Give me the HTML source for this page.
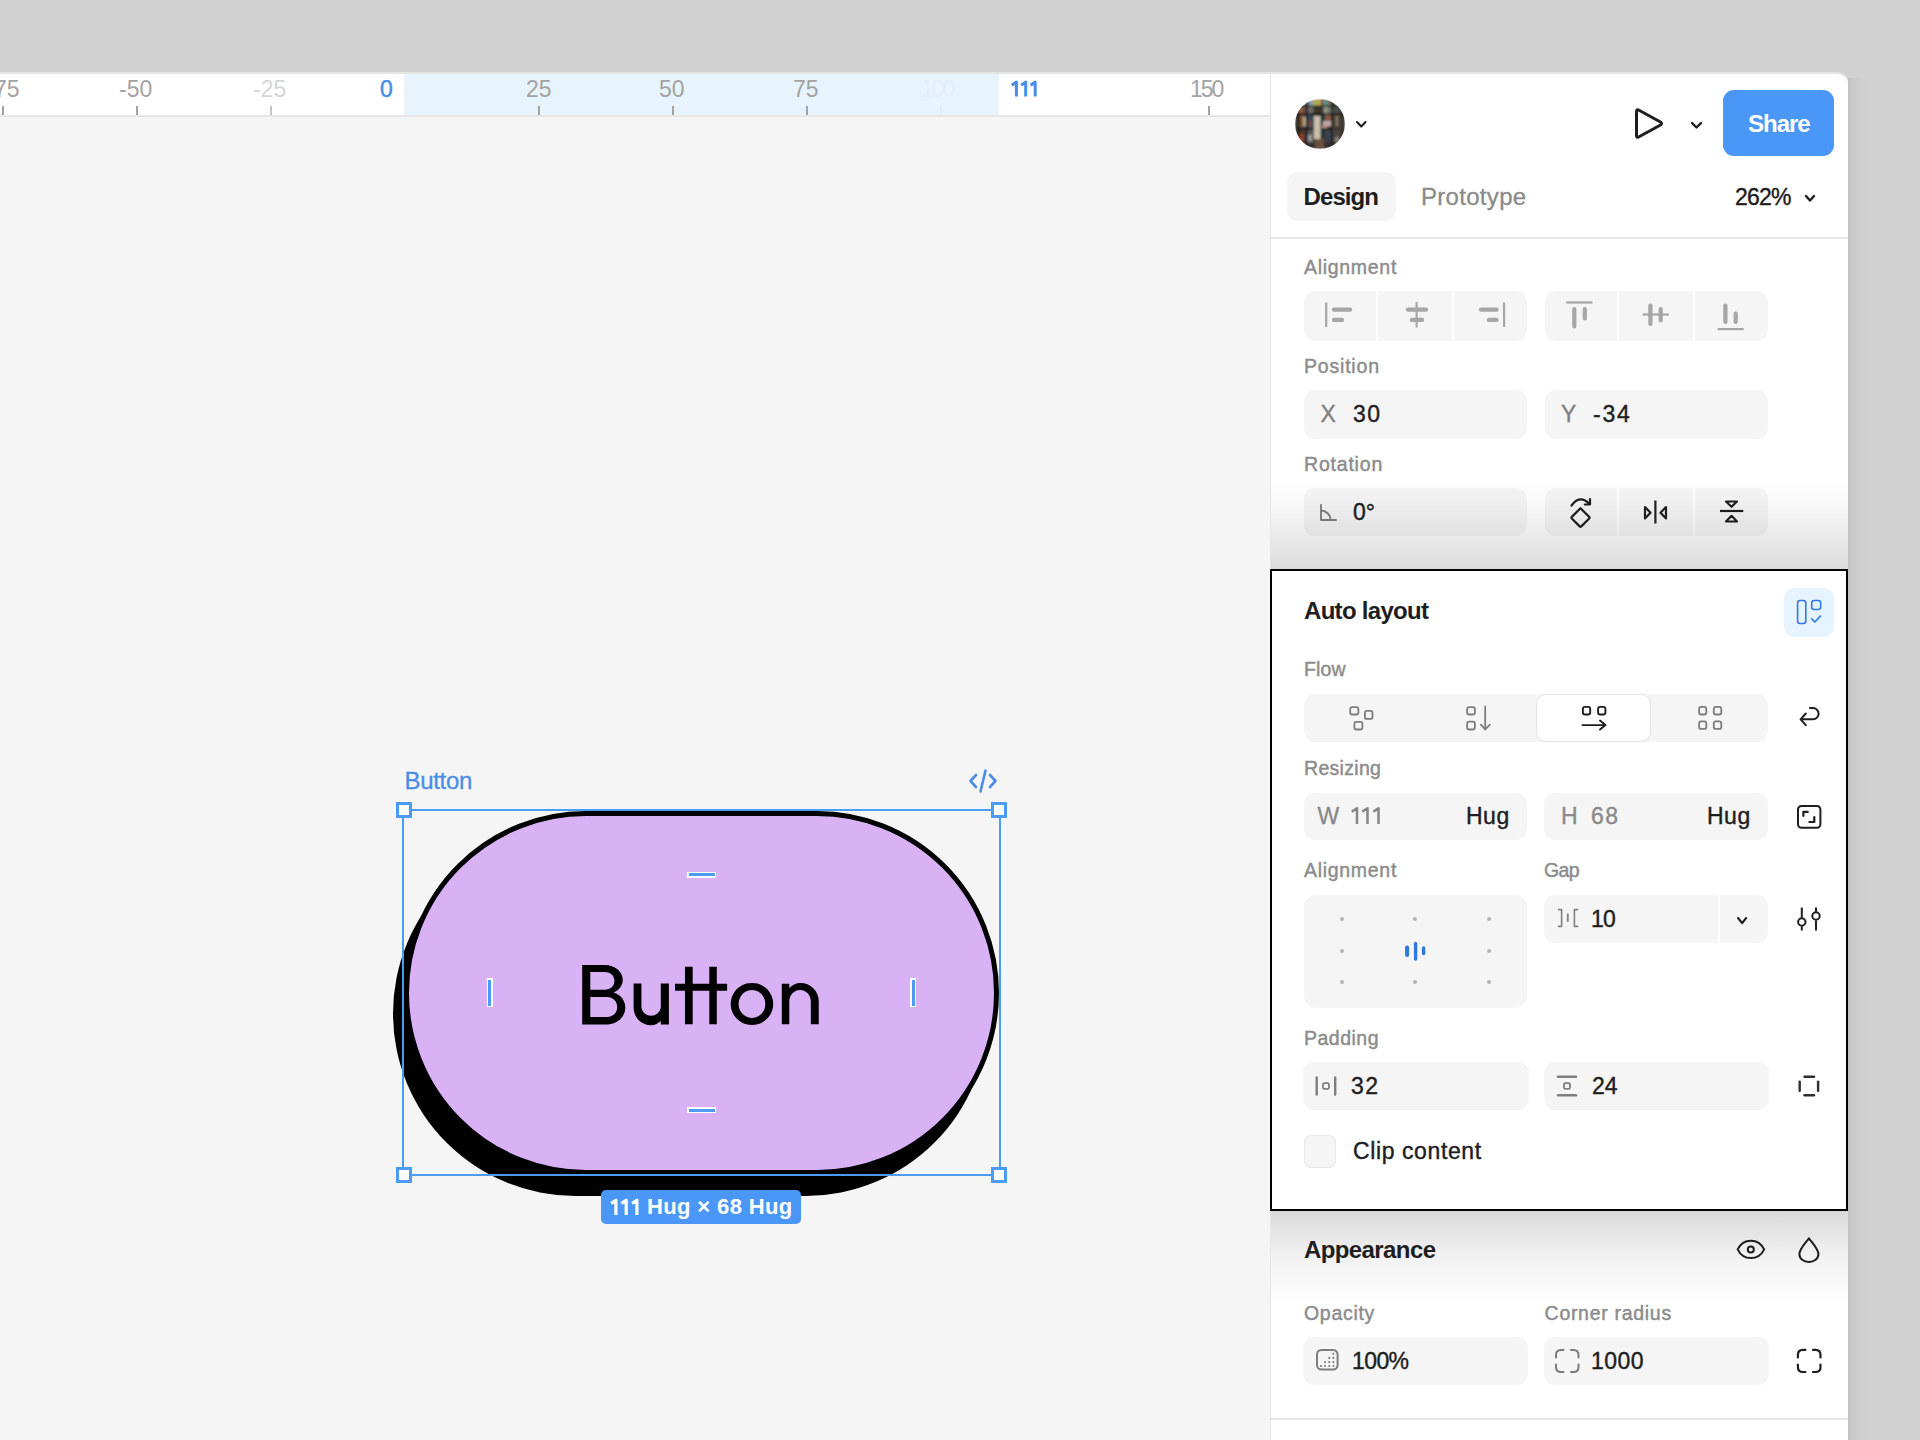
<!DOCTYPE html>
<html><head><meta charset="utf-8">
<style>
*{box-sizing:border-box;margin:0;padding:0}
html,body{width:1920px;height:1440px;overflow:hidden;background:#d1d1d1;font-family:"Liberation Sans",sans-serif}
.a{position:absolute}
.t{position:absolute;line-height:1;white-space:nowrap}
svg{position:absolute;overflow:visible}
</style></head><body>

<div class="a" style="left:0px;top:72px;width:1848px;height:1368px;background:#fff;border-radius:0px;border-top-right-radius:11px;border-top:2px solid #e3e6e3"></div>
<div class="a" style="left:1848px;top:78px;width:24px;height:1362px;background:linear-gradient(90deg,#c2c2c2 0%,#cbcbcb 25%,#d0d0d0 70%,#d1d1d1 100%);border-radius:0px;"></div>
<div class="a" style="left:0px;top:72px;width:1270px;height:2px;background:#e3e6e3;border-radius:0px;"></div>
<div class="a" style="left:404px;top:74px;width:595px;height:41px;background:#e7f3fd;border-radius:0px;"></div>
<div class="a" style="left:0px;top:115px;width:1270px;height:2px;background:#e6e6e6;border-radius:0px;"></div>
<div class="a" style="left:0px;top:117px;width:1270px;height:1323px;background:#f5f5f5;border-radius:0px;"></div>
<div class="a" style="left:2px;top:106px;width:2px;height:9px;background:#a3a3a3;border-radius:0px;"></div>
<div class="a" style="left:136px;top:106px;width:2px;height:9px;background:#a3a3a3;border-radius:0px;"></div>
<div class="a" style="left:270px;top:106px;width:2px;height:9px;background:#c4c4c4;border-radius:0px;"></div>
<div class="a" style="left:538px;top:106px;width:2px;height:9px;background:#a3a3a3;border-radius:0px;"></div>
<div class="a" style="left:672px;top:106px;width:2px;height:9px;background:#a3a3a3;border-radius:0px;"></div>
<div class="a" style="left:806px;top:106px;width:2px;height:9px;background:#a3a3a3;border-radius:0px;"></div>
<div class="a" style="left:940px;top:106px;width:2px;height:9px;background:#e3eef8;border-radius:0px;"></div>
<div class="a" style="left:1208px;top:106px;width:2px;height:9px;background:#a3a3a3;border-radius:0px;"></div>
<div class="t" style="left:-6.0px;top:77.8px;font-size:23px;color:#a3a3a3;font-weight:normal;letter-spacing:0px;">75</div>
<div class="t" style="left:119.0px;top:77.8px;font-size:23px;color:#a3a3a3;font-weight:normal;letter-spacing:0px;">-50</div>
<div class="t" style="left:253.0px;top:77.8px;font-size:23px;color:#d6d6d6;font-weight:normal;letter-spacing:0px;">-25</div>
<div class="t" style="left:380.0px;top:77.8px;font-size:23px;color:#4a8de6;font-weight:normal;letter-spacing:0px;-webkit-text-stroke:0.5px #4a8de6">0</div>
<div class="t" style="left:526.0px;top:77.8px;font-size:23px;color:#a3a3a3;font-weight:normal;letter-spacing:0px;">25</div>
<div class="t" style="left:659.0px;top:77.8px;font-size:23px;color:#a3a3a3;font-weight:normal;letter-spacing:0px;">50</div>
<div class="t" style="left:793.0px;top:77.8px;font-size:23px;color:#a3a3a3;font-weight:normal;letter-spacing:0px;">75</div>
<div class="t" style="left:921.0px;top:77.8px;font-size:23px;color:#e3eef8;font-weight:normal;letter-spacing:-2px;">100</div>
<div class="t" style="left:1190.0px;top:77.8px;font-size:23px;color:#a3a3a3;font-weight:normal;letter-spacing:-2px;">150</div>
<svg style="left:0;top:0" width="1920" height="1440" viewBox="0 0 1920 1440"><path d="M1011.80 85.20 L1016.40 82.10 L1016.40 96.60 M1021.10 85.20 L1025.70 82.10 L1025.70 96.60 M1030.60 85.20 L1035.20 82.10 L1035.20 96.60 " fill="none" stroke="#4a8de6" stroke-width="3.0" stroke-linecap="butt" stroke-linejoin="round"/></svg>
<div class="a" style="left:1270px;top:74px;width:1px;height:1366px;background:#e6e6e6;border-radius:0px;"></div>
<svg style="left:1295px;top:98.5px;" width="50" height="50" viewBox="0 0 50 50"><defs><clipPath id="avc"><circle cx="25" cy="25" r="25"/></clipPath><filter id="avb" x="0" y="0" width="1" height="1"><feGaussianBlur stdDeviation="1"/></filter></defs><g clip-path="url(#avc)"><g filter="url(#avb)"><rect x="0" y="0" width="50" height="50" fill="#35302b"/><rect x="8" y="0" width="5" height="7" fill="#6a6e6a"/><rect x="13.8" y="0" width="4.2" height="7" fill="#8aa0b8"/><rect x="18" y="0" width="8" height="7" fill="#b0a858"/><rect x="26.7" y="0" width="2" height="7" fill="#b04a4a"/><rect x="28.7" y="0" width="4" height="7" fill="#4fa08a"/><rect x="33" y="0" width="3" height="7" fill="#777060"/><rect x="38" y="0" width="6" height="7" fill="#5a4040"/><rect x="3" y="8" width="8" height="6.5" fill="#6a5048"/><rect x="5" y="8" width="2" height="6.5" fill="#a0603a"/><rect x="12.6" y="8" width="6" height="6.5" fill="#6a6a62"/><rect x="27" y="8" width="9" height="6.5" fill="#6f7a68"/><rect x="30" y="8" width="2" height="6.5" fill="#a0a090"/><rect x="37.5" y="8" width="8" height="6.5" fill="#4a5048"/><rect x="19" y="7" width="9" height="7" fill="#3a302a"/><rect x="3" y="16" width="8" height="13" fill="#5a4a40"/><rect x="6" y="17" width="2.5" height="10" fill="#985a28"/><rect x="8.5" y="18" width="2" height="9" fill="#c0c0b0"/><rect x="12.6" y="16" width="6" height="13" fill="#3a4858"/><rect x="14" y="22" width="2" height="6" fill="#8a4a30"/><rect x="29" y="16" width="7" height="12" fill="#6a5e54"/><rect x="32" y="16" width="2.2" height="12" fill="#b04a28"/><rect x="37.5" y="16" width="9" height="13" fill="#4a4038"/><rect x="41" y="17" width="2" height="10" fill="#8a7a6a"/><rect x="3" y="31" width="8" height="14" fill="#4a3830"/><rect x="5" y="35" width="3" height="8" fill="#a04020"/><rect x="12.6" y="31" width="6" height="13" fill="#5a5a58"/><rect x="13" y="36" width="4" height="6" fill="#9a9a9a"/><rect x="30" y="31" width="7" height="12" fill="#3a4250"/><rect x="37.5" y="31" width="8" height="12" fill="#4a4440"/><rect x="40" y="38" width="4" height="5" fill="#888078"/><rect x="0" y="6.6" width="50" height="1.4" fill="#1e1c1a"/><rect x="0" y="14.4" width="50" height="1.6" fill="#1a1816"/><rect x="0" y="29" width="12" height="1.6" fill="#1a1816"/><rect x="12" y="29" width="7" height="1.4" fill="#1a1816"/><rect x="28" y="29" width="9" height="1.4" fill="#1a1816"/><rect x="11" y="0" width="1.6" height="50" fill="#1a1816"/><rect x="36" y="0" width="1.6" height="50" fill="#1a1816"/><rect x="3.5" y="14" width="1.4" height="36" fill="#1a1816"/><rect x="22.5" y="16" width="7.5" height="20" fill="#243038"/><rect x="19" y="17" width="6.5" height="23" fill="#c8c0a8"/><rect x="20" y="40" width="9" height="10" fill="#6a5040"/><rect x="28" y="22" width="8" height="5" fill="#b8a8a8"/><rect x="27" y="26" width="5" height="3" fill="#b89080"/></g></g></svg>
<svg style="left:1355.5px;top:120.8px;" width="10.5" height="6" viewBox="0 0 10.5 6"><path d="M1 1 L5.25 5.5 L9.5 1" fill="none" stroke="#1e1e1e" stroke-width="2.1" stroke-linecap="round" stroke-linejoin="round"/></svg>
<svg style="left:1633px;top:107px;" width="30" height="33" viewBox="0 0 30 33"><path d="M3.5 4.5 Q3.5 1.8 6 3.2 L27.5 15 Q29.5 16.5 27.5 18 L6 29.8 Q3.5 31.2 3.5 28.5 Z" fill="none" stroke="#1e1e1e" stroke-width="3" stroke-linejoin="round"/></svg>
<svg style="left:1691px;top:121.5px;" width="11" height="6" viewBox="0 0 11 6"><path d="M1 1 L5.5 5.5 L10 1" fill="none" stroke="#1e1e1e" stroke-width="2.4" stroke-linecap="round" stroke-linejoin="round"/></svg>
<div class="a" style="left:1723px;top:90px;width:111px;height:66px;background:#4a97f7;border-radius:11px;"></div>
<div class="t" style="left:1748.0px;top:111.7px;font-size:24px;color:#fff;font-weight:bold;letter-spacing:-1.0px;">Share</div>
<div class="a" style="left:1287px;top:172px;width:109px;height:49px;background:#f5f5f5;border-radius:11px;"></div>
<div class="t" style="left:1303.5px;top:184.6px;font-size:24px;color:#1e1e1e;font-weight:bold;letter-spacing:-0.9px;">Design</div>
<div class="t" style="left:1421.0px;top:184.6px;font-size:24px;color:#8a8a8a;font-weight:normal;letter-spacing:0.3px;-webkit-text-stroke:0.3px #8a8a8a">Prototype</div>
<div class="t" style="left:1735.0px;top:185.8px;font-size:23px;color:#1e1e1e;font-weight:normal;letter-spacing:-0.8px;-webkit-text-stroke:0.4px #1e1e1e">262%</div>
<svg style="left:1805px;top:195px;" width="10" height="6" viewBox="0 0 10 6"><path d="M1 1 L5.0 5.5 L9 1" fill="none" stroke="#1e1e1e" stroke-width="2.4" stroke-linecap="round" stroke-linejoin="round"/></svg>
<div class="a" style="left:1271px;top:237px;width:577px;height:2px;background:#e8e8e8;border-radius:0px;"></div>
<div class="t" style="left:1304.0px;top:258.4px;font-size:19.5px;color:#8c8c8c;font-weight:normal;letter-spacing:0.7px;-webkit-text-stroke:0.45px #8c8c8c">Alignment</div>
<div class="a" style="left:1304px;top:291px;width:223px;height:50px;background:#f5f5f5;border-radius:11px;"></div>
<div class="a" style="left:1376px;top:291px;width:2px;height:50px;background:#fff;border-radius:0px;"></div>
<div class="a" style="left:1452px;top:291px;width:2px;height:50px;background:#fff;border-radius:0px;"></div>
<div class="a" style="left:1545px;top:291px;width:223px;height:50px;background:#f5f5f5;border-radius:11px;"></div>
<div class="a" style="left:1617px;top:291px;width:2px;height:50px;background:#fff;border-radius:0px;"></div>
<div class="a" style="left:1693px;top:291px;width:2px;height:50px;background:#fff;border-radius:0px;"></div>
<div class="t" style="left:1304.0px;top:356.7px;font-size:19.5px;color:#8c8c8c;font-weight:normal;letter-spacing:0.8px;-webkit-text-stroke:0.45px #8c8c8c">Position</div>
<div class="a" style="left:1304px;top:390px;width:223px;height:49px;background:#f5f5f5;border-radius:11px;"></div>
<div class="a" style="left:1545px;top:390px;width:223px;height:49px;background:#f5f5f5;border-radius:11px;"></div>
<div class="t" style="left:1320.5px;top:403.4px;font-size:23px;color:#7f7f7f;font-weight:normal;letter-spacing:0px;-webkit-text-stroke:0.35px #7f7f7f">X</div>
<div class="t" style="left:1353.0px;top:403.4px;font-size:23px;color:#1e1e1e;font-weight:normal;letter-spacing:1.5px;-webkit-text-stroke:0.4px #1e1e1e">30</div>
<div class="t" style="left:1561.0px;top:403.4px;font-size:23px;color:#7f7f7f;font-weight:normal;letter-spacing:0px;-webkit-text-stroke:0.35px #7f7f7f">Y</div>
<div class="t" style="left:1593.0px;top:403.4px;font-size:23px;color:#1e1e1e;font-weight:normal;letter-spacing:1.8px;-webkit-text-stroke:0.4px #1e1e1e">-34</div>
<div class="t" style="left:1304.0px;top:454.9px;font-size:19.5px;color:#8c8c8c;font-weight:normal;letter-spacing:0.8px;-webkit-text-stroke:0.45px #8c8c8c">Rotation</div>
<div class="a" style="left:1304px;top:488px;width:223px;height:48px;background:#f5f5f5;border-radius:11px;"></div>
<div class="a" style="left:1545px;top:488px;width:223px;height:48px;background:#f5f5f5;border-radius:11px;"></div>
<div class="a" style="left:1617px;top:488px;width:2px;height:48px;background:#fff;border-radius:0px;"></div>
<div class="a" style="left:1693px;top:488px;width:2px;height:48px;background:#fff;border-radius:0px;"></div>
<div class="t" style="left:1353.0px;top:501.3px;font-size:23px;color:#1e1e1e;font-weight:normal;letter-spacing:0px;-webkit-text-stroke:0.4px #1e1e1e">0°</div>
<div class="a" style="left:1271px;top:480px;width:577px;height:89px;background:linear-gradient(180deg,rgba(0,0,0,0) 0%,rgba(0,0,0,0.025) 25%,rgba(0,0,0,0.07) 55%,rgba(0,0,0,0.14) 100%);border-radius:0px;"></div>
<div class="a" style="left:1270px;top:569px;width:578px;height:642px;background:#fff;border-radius:0px;border:2px solid #000"></div>
<div class="t" style="left:1304.0px;top:599.2px;font-size:24px;color:#1e1e1e;font-weight:bold;letter-spacing:-0.7px;">Auto layout</div>
<div class="a" style="left:1784px;top:588px;width:50px;height:49px;background:#e5f4ff;border-radius:10px;"></div>
<div class="t" style="left:1304.0px;top:659.9px;font-size:19.5px;color:#8c8c8c;font-weight:normal;letter-spacing:0.1px;-webkit-text-stroke:0.45px #8c8c8c">Flow</div>
<div class="a" style="left:1304px;top:694px;width:464px;height:48px;background:#f5f5f5;border-radius:11px;"></div>
<div class="a" style="left:1536px;top:694px;width:115px;height:48px;background:#fff;border-radius:10px;border:1.5px solid #e3e3e3"></div>
<div class="t" style="left:1304.0px;top:758.9px;font-size:19.5px;color:#8c8c8c;font-weight:normal;letter-spacing:0.3px;-webkit-text-stroke:0.45px #8c8c8c">Resizing</div>
<div class="a" style="left:1304px;top:793px;width:223px;height:47px;background:#f5f5f5;border-radius:11px;"></div>
<div class="a" style="left:1544px;top:793px;width:224px;height:47px;background:#f5f5f5;border-radius:11px;"></div>
<div class="t" style="left:1317.5px;top:805.3px;font-size:23px;color:#8a8a8a;font-weight:normal;letter-spacing:0px;-webkit-text-stroke:0.35px #8a8a8a">W</div>
<svg style="left:0;top:0" width="1920" height="1440" viewBox="0 0 1920 1440"><path d="M1351.80 811.60 L1357.00 808.25 L1357.00 823.90 M1362.30 811.60 L1367.50 808.25 L1367.50 823.90 M1373.30 811.60 L1378.50 808.25 L1378.50 823.90 " fill="none" stroke="#858585" stroke-width="2.5" stroke-linecap="butt" stroke-linejoin="round"/></svg>
<div class="t" style="left:1466.0px;top:805.3px;font-size:23px;color:#1e1e1e;font-weight:normal;letter-spacing:0.5px;-webkit-text-stroke:0.4px #1e1e1e">Hug</div>
<div class="t" style="left:1561.0px;top:805.3px;font-size:23px;color:#8a8a8a;font-weight:normal;letter-spacing:0px;-webkit-text-stroke:0.35px #8a8a8a">H</div>
<div class="t" style="left:1591.0px;top:805.3px;font-size:23px;color:#8a8a8a;font-weight:normal;letter-spacing:1.5px;-webkit-text-stroke:0.35px #8a8a8a">68</div>
<div class="t" style="left:1707.0px;top:805.3px;font-size:23px;color:#1e1e1e;font-weight:normal;letter-spacing:0.5px;-webkit-text-stroke:0.4px #1e1e1e">Hug</div>
<div class="t" style="left:1304.0px;top:861.4px;font-size:19.5px;color:#8c8c8c;font-weight:normal;letter-spacing:0.7px;-webkit-text-stroke:0.45px #8c8c8c">Alignment</div>
<div class="t" style="left:1544.0px;top:861.4px;font-size:19.5px;color:#8c8c8c;font-weight:normal;letter-spacing:-0.6px;-webkit-text-stroke:0.45px #8c8c8c">Gap</div>
<div class="a" style="left:1304px;top:895px;width:223px;height:113px;background:#f5f5f5;border-radius:12px;"></div>
<div class="a" style="left:1340.0px;top:917.4px;width:4px;height:4px;border-radius:2px;background:#b5b5b5"></div>
<div class="a" style="left:1340.0px;top:949.0px;width:4px;height:4px;border-radius:2px;background:#b5b5b5"></div>
<div class="a" style="left:1340.0px;top:980.2px;width:4px;height:4px;border-radius:2px;background:#b5b5b5"></div>
<div class="a" style="left:1413.3px;top:917.4px;width:4px;height:4px;border-radius:2px;background:#b5b5b5"></div>
<div class="a" style="left:1413.3px;top:980.2px;width:4px;height:4px;border-radius:2px;background:#b5b5b5"></div>
<div class="a" style="left:1487.0px;top:917.4px;width:4px;height:4px;border-radius:2px;background:#b5b5b5"></div>
<div class="a" style="left:1487.0px;top:949.0px;width:4px;height:4px;border-radius:2px;background:#b5b5b5"></div>
<div class="a" style="left:1487.0px;top:980.2px;width:4px;height:4px;border-radius:2px;background:#b5b5b5"></div>
<div class="a" style="left:1544px;top:895px;width:224px;height:48px;background:#f5f5f5;border-radius:11px;"></div>
<div class="a" style="left:1718px;top:895px;width:2px;height:48px;background:#fff;border-radius:0px;"></div>
<div class="t" style="left:1591.0px;top:907.8px;font-size:23px;color:#1e1e1e;font-weight:normal;letter-spacing:-0.8px;-webkit-text-stroke:0.4px #1e1e1e">10</div>
<svg style="left:1737.3px;top:916.5px;" width="10.2" height="6.6" viewBox="0 0 10.2 6.6"><path d="M1 1 L5.1 6.1 L9.2 1" fill="none" stroke="#1e1e1e" stroke-width="2.1" stroke-linecap="round" stroke-linejoin="round"/></svg>
<div class="t" style="left:1304.0px;top:1029.4px;font-size:19.5px;color:#8c8c8c;font-weight:normal;letter-spacing:0.5px;-webkit-text-stroke:0.45px #8c8c8c">Padding</div>
<div class="a" style="left:1303px;top:1062px;width:226px;height:48px;background:#f5f5f5;border-radius:11px;"></div>
<div class="a" style="left:1544px;top:1062px;width:225px;height:48px;background:#f5f5f5;border-radius:11px;"></div>
<div class="t" style="left:1351.0px;top:1075.3px;font-size:23px;color:#1e1e1e;font-weight:normal;letter-spacing:1.5px;-webkit-text-stroke:0.4px #1e1e1e">32</div>
<div class="t" style="left:1592.0px;top:1075.3px;font-size:23px;color:#1e1e1e;font-weight:normal;letter-spacing:0px;-webkit-text-stroke:0.4px #1e1e1e">24</div>
<div class="a" style="left:1304px;top:1135px;width:32px;height:33px;background:#f5f5f5;border-radius:7px;border:1.5px solid #e8e8e8"></div>
<div class="t" style="left:1353.0px;top:1139.8px;font-size:23px;color:#1e1e1e;font-weight:normal;letter-spacing:0.6px;-webkit-text-stroke:0.4px #1e1e1e">Clip content</div>
<div class="a" style="left:1271px;top:1211px;width:577px;height:94px;background:linear-gradient(180deg,rgba(0,0,0,0.15) 0%,rgba(0,0,0,0.06) 45%,rgba(0,0,0,0) 100%);border-radius:0px;"></div>
<div class="t" style="left:1304.0px;top:1237.7px;font-size:24px;color:#1e1e1e;font-weight:bold;letter-spacing:-0.6px;">Appearance</div>
<div class="t" style="left:1304.0px;top:1304.4px;font-size:19.5px;color:#8c8c8c;font-weight:normal;letter-spacing:0.7px;-webkit-text-stroke:0.45px #8c8c8c">Opacity</div>
<div class="t" style="left:1544.6px;top:1304.4px;font-size:19.5px;color:#8c8c8c;font-weight:normal;letter-spacing:0.7px;-webkit-text-stroke:0.45px #8c8c8c">Corner radius</div>
<div class="a" style="left:1303px;top:1337px;width:225px;height:48px;background:#f5f5f5;border-radius:11px;"></div>
<div class="a" style="left:1544px;top:1337px;width:225px;height:48px;background:#f5f5f5;border-radius:11px;"></div>
<div class="t" style="left:1352.0px;top:1350.1px;font-size:23px;color:#1e1e1e;font-weight:normal;letter-spacing:-0.6px;-webkit-text-stroke:0.4px #1e1e1e">100%</div>
<div class="t" style="left:1591.0px;top:1350.1px;font-size:23px;color:#1e1e1e;font-weight:normal;letter-spacing:0.5px;-webkit-text-stroke:0.4px #1e1e1e">1000</div>
<div class="a" style="left:1271px;top:1418px;width:577px;height:2px;background:#e8e8e8;border-radius:0px;"></div>
<svg style="left:0;top:0" width="1920" height="1440" viewBox="0 0 1920 1440"><line x1="1326.2" y1="302.5" x2="1326.2" y2="327" stroke="#a6a6a6" stroke-width="2.2" stroke-linecap="butt"/><line x1="1334" y1="309.6" x2="1350" y2="309.6" stroke="#a6a6a6" stroke-width="4.4" stroke-linecap="round"/><line x1="1334" y1="319.9" x2="1342" y2="319.9" stroke="#a6a6a6" stroke-width="4.4" stroke-linecap="round"/><line x1="1416.6" y1="302" x2="1416.6" y2="327.5" stroke="#a6a6a6" stroke-width="2.2" stroke-linecap="butt"/><line x1="1408" y1="309.6" x2="1426" y2="309.6" stroke="#a6a6a6" stroke-width="4.4" stroke-linecap="round"/><line x1="1412" y1="319.9" x2="1422" y2="319.9" stroke="#a6a6a6" stroke-width="4.4" stroke-linecap="round"/><line x1="1504.1" y1="302.5" x2="1504.1" y2="327" stroke="#a6a6a6" stroke-width="2.2" stroke-linecap="butt"/><line x1="1481" y1="309.6" x2="1496.5" y2="309.6" stroke="#a6a6a6" stroke-width="4.4" stroke-linecap="round"/><line x1="1489" y1="319.9" x2="1496.5" y2="319.9" stroke="#a6a6a6" stroke-width="4.4" stroke-linecap="round"/><line x1="1566.2" y1="302.5" x2="1592.4" y2="302.5" stroke="#a6a6a6" stroke-width="2.2" stroke-linecap="butt"/><line x1="1574.3" y1="309" x2="1574.3" y2="326.5" stroke="#a6a6a6" stroke-width="4.2" stroke-linecap="round"/><line x1="1584.8" y1="309" x2="1584.8" y2="318.5" stroke="#a6a6a6" stroke-width="4.2" stroke-linecap="round"/><line x1="1642.6" y1="314.5" x2="1668.9" y2="314.5" stroke="#a6a6a6" stroke-width="2.2" stroke-linecap="butt"/><line x1="1650.4" y1="305.5" x2="1650.4" y2="324" stroke="#a6a6a6" stroke-width="4.2" stroke-linecap="round"/><line x1="1660.7" y1="309" x2="1660.7" y2="320.5" stroke="#a6a6a6" stroke-width="4.2" stroke-linecap="round"/><line x1="1717.6" y1="329.1" x2="1743.8" y2="329.1" stroke="#a6a6a6" stroke-width="2.2" stroke-linecap="butt"/><line x1="1725.4" y1="305.5" x2="1725.4" y2="322" stroke="#a6a6a6" stroke-width="4.2" stroke-linecap="round"/><line x1="1735.7" y1="313.5" x2="1735.7" y2="322" stroke="#a6a6a6" stroke-width="4.2" stroke-linecap="round"/><path d="M1321 505 L1321 520 L1336 520 M1321 510.5 A9.5 9.5 0 0 1 1330.5 520" fill="none" stroke="#7a7a7a" stroke-width="1.9" stroke-linecap="round" stroke-linejoin="round" /><path d="M1580.5 508.2 L1589.2 516.9 Q1590 517.7 1589.2 518.5 L1581.3 526.4 Q1580.5 527.2 1579.7 526.4 L1571.8 518.5 Q1571 517.7 1571.8 516.9 Z" fill="none" stroke="#1e1e1e" stroke-width="2.2" stroke-linecap="round" stroke-linejoin="round" /><path d="M1571.5 505.5 Q1580 494 1589.5 504 M1590 499 L1590 504.5 L1584.8 504.5" fill="none" stroke="#1e1e1e" stroke-width="2.2" stroke-linecap="round" stroke-linejoin="round" /><line x1="1655.4" y1="500.5" x2="1655.4" y2="523.5" stroke="#1e1e1e" stroke-width="2.2" stroke-linecap="butt"/><path d="M1645 507 L1650.5 512.7 L1645 518.4 Z" fill="none" stroke="#1e1e1e" stroke-width="2.2" stroke-linecap="round" stroke-linejoin="round" /><path d="M1666 507 L1660.5 512.7 L1666 518.4 Z" fill="none" stroke="#1e1e1e" stroke-width="2.2" stroke-linecap="round" stroke-linejoin="round" /><line x1="1720" y1="511" x2="1743.3" y2="511" stroke="#1e1e1e" stroke-width="2.2" stroke-linecap="butt"/><path d="M1726 501.5 L1737 501.5 L1731.5 506.8 Z" fill="none" stroke="#1e1e1e" stroke-width="2.2" stroke-linecap="round" stroke-linejoin="round" /><path d="M1726 521.5 L1737 521.5 L1731.5 515.8 Z" fill="none" stroke="#1e1e1e" stroke-width="2.2" stroke-linecap="round" stroke-linejoin="round" /><rect x="1797.6" y="600.5" width="8.2" height="23" rx="2.5" fill="none" stroke="#2f7ae5" stroke-width="1.6"/><rect x="1811.7" y="600.5" width="9" height="9" rx="2.5" fill="none" stroke="#2f7ae5" stroke-width="1.6"/><path d="M1811.8 618.8 L1814.8 622 L1820.3 616.2" fill="none" stroke="#2f7ae5" stroke-width="1.7" stroke-linecap="round" stroke-linejoin="round" /><rect x="1350.2" y="707.2" width="8.2" height="7.3" rx="2" fill="none" stroke="#7d7d7d" stroke-width="1.8"/><rect x="1364.9" y="710.9" width="7.6" height="8" rx="2" fill="none" stroke="#7d7d7d" stroke-width="1.8"/><rect x="1354.4" y="721.9" width="8" height="7.6" rx="2" fill="none" stroke="#7d7d7d" stroke-width="1.8"/><rect x="1467.1" y="707.2" width="7.8" height="7.3" rx="2" fill="none" stroke="#7d7d7d" stroke-width="1.8"/><rect x="1467.1" y="721.7" width="7.8" height="7.8" rx="2" fill="none" stroke="#7d7d7d" stroke-width="1.8"/><path d="M1485.2 706.5 L1485.2 729.5 M1480.9 724.6 L1485.2 729.5 L1489.8 724.6" fill="none" stroke="#7d7d7d" stroke-width="1.8" stroke-linecap="round" stroke-linejoin="round" /><rect x="1582.9" y="706.9" width="7.3" height="7.6" rx="2" fill="none" stroke="#1e1e1e" stroke-width="1.9"/><rect x="1598.1" y="706.9" width="7.3" height="7.6" rx="2" fill="none" stroke="#1e1e1e" stroke-width="1.9"/><path d="M1582.5 725.1 L1605.5 725.1 M1600 720.6 L1605.5 725.1 L1600 729.6" fill="none" stroke="#1e1e1e" stroke-width="1.9" stroke-linecap="round" stroke-linejoin="round" /><rect x="1699.1" y="706.9" width="7.2" height="7.6" rx="2" fill="none" stroke="#7d7d7d" stroke-width="1.8"/><rect x="1713.8" y="706.9" width="7.5" height="7.6" rx="2" fill="none" stroke="#7d7d7d" stroke-width="1.8"/><rect x="1699.1" y="721.3" width="7.2" height="7.6" rx="2" fill="none" stroke="#7d7d7d" stroke-width="1.8"/><rect x="1713.8" y="721.3" width="7.5" height="7.6" rx="2" fill="none" stroke="#7d7d7d" stroke-width="1.8"/><path d="M1801 719.3 L1813 719.3 A5.6 5.6 0 0 0 1813 708.1 L1810 708.1 M1805.8 713.5 L1800.6 719.3 L1805.8 725.2" fill="none" stroke="#1e1e1e" stroke-width="2" stroke-linecap="round" stroke-linejoin="round" /><rect x="1798" y="805.9" width="22.4" height="21.9" rx="3.5" fill="none" stroke="#1e1e1e" stroke-width="2"/><path d="M1803.4 815.8 L1803.4 811.8 L1807.8 811.8 M1814.3 817 L1814.3 822 L1809.4 822" fill="none" stroke="#1e1e1e" stroke-width="2.2" stroke-linecap="round" stroke-linejoin="round" /><path d="M1558.6 909.6 L1561.6 909.6 L1561.6 926.4 L1558.6 926.4 M1577.6 909.6 L1574.4 909.6 L1574.4 926.4 L1577.6 926.4" fill="none" stroke="#808080" stroke-width="1.6" stroke-linecap="round" stroke-linejoin="round" /><line x1="1567.8" y1="913.5" x2="1567.8" y2="921.7" stroke="#808080" stroke-width="1.8" stroke-linecap="butt"/><line x1="1801.8" y1="907.5" x2="1801.8" y2="917.6" stroke="#1e1e1e" stroke-width="2" stroke-linecap="butt"/><line x1="1801.8" y1="926.4" x2="1801.8" y2="930.5" stroke="#1e1e1e" stroke-width="2" stroke-linecap="butt"/><circle cx="1801.8" cy="922" r="3.7" fill="none" stroke="#1e1e1e" stroke-width="2"/><line x1="1816" y1="907.5" x2="1816" y2="911.7" stroke="#1e1e1e" stroke-width="2" stroke-linecap="butt"/><line x1="1816" y1="920.4" x2="1816" y2="930.5" stroke="#1e1e1e" stroke-width="2" stroke-linecap="butt"/><circle cx="1816" cy="916" r="3.7" fill="none" stroke="#1e1e1e" stroke-width="2"/><line x1="1407.1" y1="947.5" x2="1407.1" y2="955" stroke="#2d77e0" stroke-width="4" stroke-linecap="round"/><line x1="1415.6" y1="943.5" x2="1415.6" y2="959" stroke="#2d77e0" stroke-width="3.3" stroke-linecap="round"/><line x1="1423.6" y1="948" x2="1423.6" y2="953.5" stroke="#2d77e0" stroke-width="3.4" stroke-linecap="round"/><line x1="1316.7" y1="1077.5" x2="1316.7" y2="1094.5" stroke="#7e7e7e" stroke-width="2.4" stroke-linecap="round"/><line x1="1335.2" y1="1077.5" x2="1335.2" y2="1094.5" stroke="#7e7e7e" stroke-width="2.4" stroke-linecap="round"/><rect x="1323" y="1083.1" width="6" height="5.8" rx="1.5" fill="none" stroke="#7e7e7e" stroke-width="1.8"/><line x1="1558" y1="1076.8" x2="1576" y2="1076.8" stroke="#7e7e7e" stroke-width="2.4" stroke-linecap="round"/><line x1="1558" y1="1095.2" x2="1576" y2="1095.2" stroke="#7e7e7e" stroke-width="2.4" stroke-linecap="round"/><rect x="1564" y="1083.1" width="6" height="5.8" rx="1.5" fill="none" stroke="#7e7e7e" stroke-width="1.8"/><line x1="1804.5" y1="1076.7" x2="1814" y2="1076.7" stroke="#2e2e2e" stroke-width="2.4" stroke-linecap="round"/><line x1="1804.5" y1="1095.2" x2="1814" y2="1095.2" stroke="#2e2e2e" stroke-width="2.4" stroke-linecap="round"/><line x1="1799.7" y1="1081.6" x2="1799.7" y2="1090.8" stroke="#2e2e2e" stroke-width="2.4" stroke-linecap="round"/><line x1="1818.1" y1="1081.6" x2="1818.1" y2="1090.8" stroke="#2e2e2e" stroke-width="2.4" stroke-linecap="round"/><path d="M1737.6 1249.4 C1740.3 1244 1745 1240.7 1750.9 1240.7 C1756.8 1240.7 1761.5 1244 1764.2 1249.4 C1761.5 1254.8 1756.8 1258.1 1750.9 1258.1 C1745 1258.1 1740.3 1254.8 1737.6 1249.4 Z" fill="none" stroke="#1e1e1e" stroke-width="2" stroke-linecap="round" stroke-linejoin="round" /><circle cx="1750.8" cy="1249.5" r="3" fill="none" stroke="#1e1e1e" stroke-width="2"/><path d="M1808.9 1238.3 C1812.3 1242.8 1818.4 1249.2 1818.4 1254 C1818.4 1258.9 1814.2 1262 1808.9 1262 C1803.6 1262 1799.4 1258.9 1799.4 1254 C1799.4 1249.2 1805.5 1242.8 1808.9 1238.3 Z" fill="none" stroke="#1e1e1e" stroke-width="2" stroke-linecap="round" stroke-linejoin="round" /><rect x="1317" y="1349.9" width="20.6" height="19.7" rx="4.5" fill="none" stroke="#7c7c7c" stroke-width="2"/><circle cx="1333.4" cy="1353.75" r="1.05" fill="#7c7c7c"/><circle cx="1329.25" cy="1357.9" r="1.05" fill="#7c7c7c"/><circle cx="1333.4" cy="1357.9" r="1.05" fill="#7c7c7c"/><circle cx="1325" cy="1362.1" r="1.05" fill="#7c7c7c"/><circle cx="1329.25" cy="1362.1" r="1.05" fill="#7c7c7c"/><circle cx="1333.4" cy="1362.1" r="1.05" fill="#7c7c7c"/><circle cx="1321" cy="1366" r="1.05" fill="#7c7c7c"/><circle cx="1325" cy="1366" r="1.05" fill="#7c7c7c"/><circle cx="1329.25" cy="1366" r="1.05" fill="#7c7c7c"/><circle cx="1333.4" cy="1366" r="1.05" fill="#7c7c7c"/><path d="M1556 1357.4 L1556 1354.9 Q1556 1349.9 1561 1349.9 L1563.5 1349.9 M1571.0 1349.9 L1573.5 1349.9 Q1578.5 1349.9 1578.5 1354.9 L1578.5 1357.4 M1578.5 1364.5 L1578.5 1367 Q1578.5 1372 1573.5 1372 L1571.0 1372 M1563.5 1372 L1561 1372 Q1556 1372 1556 1367 L1556 1364.5" fill="none" stroke="#7a7a7a" stroke-width="2" stroke-linecap="round" stroke-linejoin="round" /><path d="M1797.9 1357.4 L1797.9 1354.9 Q1797.9 1349.9 1802.9 1349.9 L1805.4 1349.9 M1813.0 1349.9 L1815.5 1349.9 Q1820.5 1349.9 1820.5 1354.9 L1820.5 1357.4 M1820.5 1364.5 L1820.5 1367 Q1820.5 1372 1815.5 1372 L1813.0 1372 M1805.4 1372 L1802.9 1372 Q1797.9 1372 1797.9 1367 L1797.9 1364.5" fill="none" stroke="#1e1e1e" stroke-width="2.2" stroke-linecap="round" stroke-linejoin="round" /></svg>
<div class="a" style="left:393.3px;top:831.4px;width:595.0px;height:364.5000000000001px;background:#000;border-radius:200px;"></div>
<div class="a" style="left:404px;top:810.5px;width:595px;height:364.0px;background:#d9b2f5;border-radius:200px;border:5px solid #000"></div>
<svg style="left:0px;top:0px;left:0;top:0" width="1920" height="1440" viewBox="0 0 1920 1440"><path fill-rule="evenodd" fill="#000" d="M582.2 965 H605 C614.5 965 622.8 971.5 622.8 979.6 C622.8 985.6 619 990.6 613.6 992.6 C620.6 994.6 625.3 1000.6 625.3 1007.4 C625.3 1016.8 617.3 1024.4 607.2 1024.4 H582.2 Z M590.3 971.9 H605 C610.5 971.9 614.4 975.4 614.4 980.8 C614.4 986.3 610.5 989.7 605 989.7 H590.3 Z M590.3 996.9 H607 C613 996.9 617.2 1001.3 617.2 1006.9 C617.2 1012.6 613 1016.9 607 1016.9 H590.3 Z M633.6 983.6 H641.4 V1007.7 A9.85 9.85 0 0 0 660.8 1007.7 V983.6 H668.9 V1024.4 H660.8 V1021 C657.5 1023.8 654.5 1025.3 651.25 1025.3 A17.65 17.65 0 0 1 633.6 1007.7 Z M685 966.7 H692.7 V983.75 H709.3 V966.7 H716.8 V983.75 H727.1 V990.8 H716.8 V1024.2 H709.3 V990.8 H692.7 V1024.2 H685 V990.8 H675 V983.75 H685 Z M751.95 982.9 A21.25 21.05 0 1 1 751.94 982.9 Z M751.95 990 A13.4 13.95 0 1 0 751.96 990 Z M781.8 983.75 H789.3 V988 C792.5 984.8 796.3 982.9 800.3 982.9 A18.45 18.5 0 0 1 818.75 1001.4 V1024.2 H810.8 V1001.4 A10.75 11.4 0 0 0 789.3 1001.4 V1024.2 H781.8 Z"/></svg>
<div class="a" style="left:687px;top:871.7px;width:29px;height:6px;background:#fff;padding:1.5px"><div style="width:100%;height:100%;background:#4c9bf5"></div></div>
<div class="a" style="left:687px;top:1107.3px;width:29px;height:6px;background:#fff;padding:1.5px"><div style="width:100%;height:100%;background:#4c9bf5"></div></div>
<div class="a" style="left:486.8px;top:978px;width:6px;height:29px;background:#fff;padding:1.5px"><div style="width:100%;height:100%;background:#4c9bf5"></div></div>
<div class="a" style="left:910.2px;top:978px;width:6px;height:29px;background:#fff;padding:1.5px"><div style="width:100%;height:100%;background:#4c9bf5"></div></div>
<div class="a" style="left:403px;top:809px;width:597px;height:2px;background:#4c9bf5;border-radius:0px;"></div>
<div class="a" style="left:403px;top:1174px;width:597px;height:2px;background:#4c9bf5;border-radius:0px;"></div>
<div class="a" style="left:402px;top:809px;width:2px;height:367px;background:#4c9bf5;border-radius:0px;"></div>
<div class="a" style="left:999px;top:809px;width:2px;height:367px;background:#4c9bf5;border-radius:0px;"></div>
<div class="a" style="left:396px;top:802px;width:16px;height:16px;background:#fff;border:3px solid #4c9bf5"></div>
<div class="a" style="left:991px;top:802px;width:16px;height:16px;background:#fff;border:3px solid #4c9bf5"></div>
<div class="a" style="left:396px;top:1167px;width:16px;height:16px;background:#fff;border:3px solid #4c9bf5"></div>
<div class="a" style="left:991px;top:1167px;width:16px;height:16px;background:#fff;border:3px solid #4c9bf5"></div>
<div class="t" style="left:404.5px;top:768.7px;font-size:24px;color:#4a8de6;font-weight:normal;letter-spacing:-0.3px;-webkit-text-stroke:0.3px #4a8de6">Button</div>
<svg style="left:968px;top:769px;" width="30" height="24" viewBox="0 0 30 24"><path d="M8 6 L2.5 12 L8 18 M22 6 L27.5 12 L22 18 M17.5 1.5 L12.5 22.5" fill="none" stroke="#4a8de6" stroke-width="2.6" stroke-linecap="round" stroke-linejoin="round"/></svg>
<div class="a" style="left:601px;top:1189.5px;width:200px;height:34.5px;background:#4a97f7;border-radius:5px;"></div>
<svg style="left:0;top:0" width="1920" height="1440" viewBox="0 0 1920 1440"><path d="M611.10 1203.30 L615.90 1200.30 L615.90 1214.90 M621.40 1203.30 L626.20 1200.30 L626.20 1214.90 M632.10 1203.30 L636.90 1200.30 L636.90 1214.90 " fill="none" stroke="#fff" stroke-width="3.2" stroke-linecap="butt" stroke-linejoin="round"/></svg>
<div class="t" style="left:647.0px;top:1195.5px;font-size:22px;color:#fff;font-weight:bold;letter-spacing:0.37px;">Hug × 68 Hug</div>
</body></html>
